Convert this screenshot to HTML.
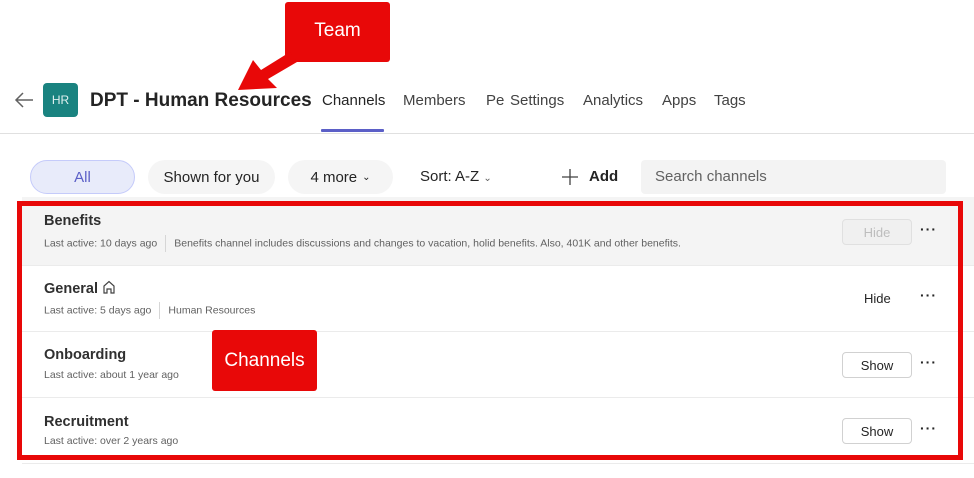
<!DOCTYPE html>
<html><head><meta charset="utf-8"><style>
*{margin:0;padding:0;box-sizing:border-box}
body{width:974px;height:478px;background:#fff;font-family:"Segoe UI","Liberation Sans",sans-serif;color:#242424;position:relative;overflow:hidden}
.a{position:absolute;white-space:nowrap}
.tab{position:absolute;top:92px;font-size:15px;color:#424242}
.pill{position:absolute;top:160px;height:34px;border-radius:17px;background:#f5f5f5;font-size:15px;display:flex;align-items:center;justify-content:center;color:#242424}
.row{position:absolute;left:22px;width:952px;border-bottom:1px solid #ebebeb}
.nm{position:absolute;left:22px;font-size:14.5px;font-weight:600;color:#303030}
.sub{position:absolute;left:22px;font-size:10.5px;color:#616161}
.btn{position:absolute;left:820px;width:70px;height:26px;border:1px solid #d1d1d1;border-radius:4px;font-size:13px;display:flex;align-items:center;justify-content:center;background:#fff}
.dots{position:absolute;left:898px;font-size:14px;font-weight:700;letter-spacing:1px}
.sep{display:inline-block;width:1px;height:17px;background:#d6d6d6;vertical-align:middle;margin:0 8px}
</style></head><body>
<svg class="a" style="left:14px;top:91px" width="20" height="18" viewBox="0 0 20 18"><path d="M9 2 L2 9 L9 16 M2 9 H19" fill="none" stroke="#616161" stroke-width="1.5"/></svg>
<div class="a" style="left:43px;top:83px;width:35px;height:34px;background:#1a8380;border-radius:4px;color:#e0f0ef;font-size:12px;display:flex;align-items:center;justify-content:center">HR</div>
<div class="a" style="left:90px;top:90px;font-size:19px;font-weight:700;color:#242424">DPT - Human Resources</div>
<div class="tab" style="left:322px;color:#242424">Channels</div>
<div class="tab" style="left:403px">Members</div>
<div class="tab" style="left:486px">Pe</div>
<div class="tab" style="left:510px">Settings</div>
<div class="tab" style="left:583px">Analytics</div>
<div class="tab" style="left:662px">Apps</div>
<div class="tab" style="left:714px">Tags</div>
<div class="a" style="left:321px;top:129px;width:63px;height:3px;background:#5b5fc7;border-radius:1px"></div>
<div class="a" style="left:0;top:133px;width:974px;height:1px;background:#e0e0e0"></div>

<div class="pill" style="left:30px;width:105px;background:#e8ebfa;border:1px solid #c5cbfa;color:#5b5fc7">All</div>
<div class="pill" style="left:148px;width:127px">Shown for you</div>
<div class="pill" style="left:288px;width:105px">4 more <span style="font-size:10px;margin-left:5px">&#8964;</span></div>
<div class="a" style="left:420px;top:168px;font-size:15px">Sort: A-Z <span style="font-size:10px;color:#616161">&#8964;</span></div>
<svg class="a" style="left:562px;top:169px" width="16" height="16"><path d="M8 0V16M0 8H16" stroke="#424242" stroke-width="1.3"/></svg>
<div class="a" style="left:589px;top:168px;font-size:15px;font-weight:600">Add</div>
<div class="a" style="left:641px;top:160px;width:305px;height:34px;background:#f3f3f3;border-radius:4px;font-size:15px;color:#616161;padding:8px 14px">Search channels</div>

<div class="row" style="top:197px;height:69px;background:#f4f4f4"></div>
<div class="row" style="top:266px;height:66px"></div>
<div class="row" style="top:332px;height:66px"></div>
<div class="row" style="top:398px;height:66px"></div>

<div class="a" style="left:22px;top:0;width:952px">
<div class="nm" style="top:213px">Benefits</div>
<div class="sub" style="top:235px">Last active: 10 days ago<span class="sep"></span>Benefits channel includes discussions and changes to vacation, holid benefits. Also, 401K and other benefits.</div>
<div class="btn" style="top:219px;background:#f0f0f0;border-color:#e0e0e0;color:#bdbdbd">Hide</div>
<div class="dots" style="top:221px">···</div>
<div class="nm" style="top:280px">General <svg width="14" height="14" viewBox="0 0 14 14" style="vertical-align:-1px"><path d="M2 13V6L7 1.5L12 6V13H9V9H5V13Z" fill="none" stroke="#424242" stroke-width="1.2"/></svg></div>
<div class="sub" style="top:302px">Last active: 5 days ago<span class="sep"></span>Human Resources</div>
<div class="a" style="left:842px;top:291px;font-size:13px">Hide</div>
<div class="dots" style="top:287px">···</div>
<div class="nm" style="top:347px">Onboarding</div>
<div class="sub" style="top:369px">Last active: about 1 year ago</div>
<div class="btn" style="top:352px">Show</div>
<div class="dots" style="top:354px">···</div>
<div class="nm" style="top:414px">Recruitment</div>
<div class="sub" style="top:435px">Last active: over 2 years ago</div>
<div class="btn" style="top:418px">Show</div>
<div class="dots" style="top:420px">···</div>
</div>

<div class="a" style="left:17px;top:201px;width:946px;height:259px;border:5px solid #e80808"></div>

<div class="a" style="left:285px;top:2px;width:105px;height:60px;background:#e80808;border-radius:3px;color:#fff;font-family:'Liberation Sans',sans-serif;font-size:19px;display:flex;align-items:center;justify-content:center;padding-bottom:3px">Team</div>
<svg class="a" style="left:0;top:0" width="400" height="100"><path d="M238 90 L253 60 L261 70 L290 52 L297 62 L268 79 L277 88 Z" fill="#e80808"/></svg>
<div class="a" style="left:212px;top:330px;width:105px;height:61px;background:#e80808;border-radius:3px;color:#fff;font-family:'Liberation Sans',sans-serif;font-size:19px;display:flex;align-items:center;justify-content:center">Channels</div>
</body></html>
